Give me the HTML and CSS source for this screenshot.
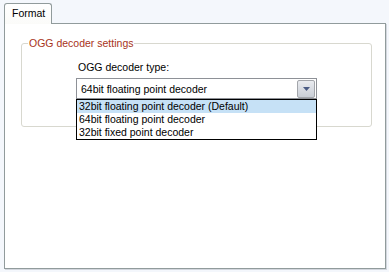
FILE: index.html
```html
<!DOCTYPE html>
<html>
<head>
<meta charset="utf-8">
<link rel="stylesheet" href="styles.css">
</head>
<body>
<div class="dialog">
  <div class="tabs">
    <div class="tab">Format</div>
  </div>
  <div class="panel">
    <fieldset class="group">
      <legend class="group-title">OGG decoder settings</legend>
      <div class="field">
        <div class="field-label">OGG decoder type:</div>
        <div class="combo">
          <div class="combo-value">64bit floating point decoder</div>
          <div class="combo-btn">
            <svg width="7" height="4" viewBox="0 0 7 4"><path d="M0 0h7L3.5 4z" fill="#4a5b84"/></svg>
          </div>
          <ul class="combo-list">
            <li class="selected">32bit floating point decoder (Default)</li>
            <li>64bit floating point decoder</li>
            <li>32bit fixed point decoder</li>
          </ul>
        </div>
      </div>
    </fieldset>
  </div>
</div>
</body>
</html>
```
FILE: styles.css
```css
html, body {
  margin: 0;
  padding: 0;
}
body {
  background: #f4f7fc;
  font-family: "Liberation Sans", Arial, sans-serif;
  font-size: 10.5px;
  color: #000;
  width: 389px;
  height: 272px;
  overflow: hidden;
}
.dialog {
  padding: 3px 0 0 4px;
}
.tabs {
  display: flex;
  height: 20px;
}
.tab {
  width: 48px;
  height: 21px;
  box-sizing: border-box;
  border: 1px solid #919b9c;
  border-bottom: none;
  border-radius: 3px 3px 0 0;
  background: linear-gradient(#ffffff, #fbfbf9);
  padding: 3px 0 0 7px;
  position: relative;
  z-index: 1;
  margin-bottom: -1px;
}
.panel {
  width: 382px;
  height: 246px;
  box-sizing: border-box;
  border: 1px solid #919b9c;
  background: #fff;
  box-shadow: 1px 1px 0 #d3d7de;
  padding: 13px 0 0 16px;
}
.group {
  margin: 0;
  width: 351px;
  height: 90px;
  box-sizing: border-box;
  border: 1px solid #d8d8cf;
  border-radius: 3px;
  padding: 0;
}
.group-title {
  color: #a8331a;
  padding: 0 1px;
  margin-left: 6px;
}
.field {
  padding: 12px 0 0 54px;
}
.field-label {
  height: 17px;
  padding-left: 2px;
}
.combo {
  position: relative;
  width: 241px;
  height: 21px;
  box-sizing: border-box;
  border: 1px solid #8e9197;
  display: flex;
  align-items: center;
  padding: 0 1px 0 4px;
}
.combo-value {
  flex: 1;
}
.combo-btn {
  width: 18px;
  height: 18px;
  box-sizing: border-box;
  border: 1px solid #a3a6ab;
  border-radius: 2px;
  background: linear-gradient(#e9ebef, #c9ced6);
  display: flex;
  align-items: center;
  justify-content: center;
}
.combo-list {
  position: absolute;
  left: 0;
  top: 20px;
  width: 241px;
  box-sizing: border-box;
  margin: 0 0 0 -1px;
  padding: 0;
  list-style: none;
  background: #fff;
  border: 1px solid #000;
}
.combo-list li {
  height: 13px;
  line-height: 13px;
  padding-left: 2px;
}
.combo-list li.selected {
  background: #c6e1f6;
}
```
